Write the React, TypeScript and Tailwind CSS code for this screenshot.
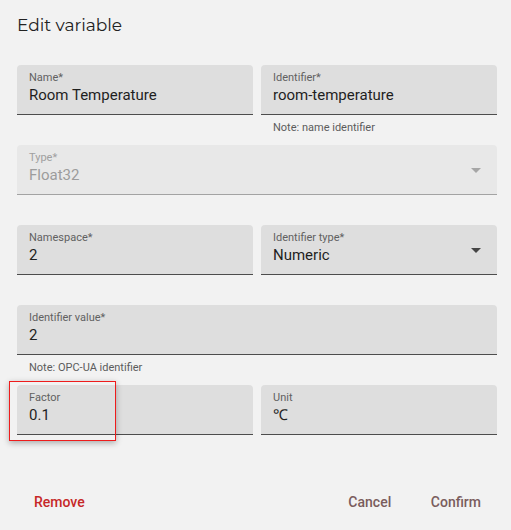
import React from "react";

const ROBOTO = "font-['Roboto','Liberation_Sans',sans-serif]";

function Arrow({ disabled }: { disabled?: boolean }) {
  return (
    <svg
      width="10"
      height="5"
      viewBox="0 0 10 5"
      className="absolute right-[16px] top-[23px]"
      aria-hidden
    >
      <path d="M0 0 L10 0 L5 5 Z" fill={disabled ? "#a6a6a6" : "#454545"} />
    </svg>
  );
}

function Field({
  label,
  value,
  note,
  disabled,
  select,
  className = "",
}: {
  label: string;
  value: string;
  note?: string;
  disabled?: boolean;
  select?: boolean;
  className?: string;
}) {
  return (
    <div className={`flex flex-col ${className}`}>
      <div
        className={`relative h-[50px] rounded-t-[4px] border-b border-solid px-3 pt-[6px] ${
          disabled
            ? "border-[#a3a3a3] bg-[#e8e8e8]"
            : "border-[#4d4d4d] bg-[#dedede]"
        }`}
      >
        <div
          className={`text-[11px] leading-[14px] ${
            disabled ? "text-[#a0a0a0]" : "text-[#616161]"
          }`}
        >
          {label}
        </div>
        <div
          className={`text-[15px] leading-[21px] ${
            disabled ? "text-[#9c9c9c]" : "text-[#1f1f1f]"
          }`}
        >
          {value}
        </div>
        {select && <Arrow disabled={disabled} />}
      </div>
      <div className="h-[30px] px-3 pt-[6px] text-[11px] leading-[14px] text-[#5c5c5c]">
        {note}
      </div>
    </div>
  );
}

export default function App() {
  return (
    <div
      className={`relative h-[530px] w-[511px] overflow-hidden bg-[#f2f2f2] ${ROBOTO}`}
    >
      <h2 className="m-0 px-[17px] pt-[13px] font-['Montserrat','Open_Sans','Lato',sans-serif] text-[17px] font-normal leading-[24px] text-[#222]">
        Edit variable
      </h2>

      <div className="grid grid-cols-2 gap-x-2 px-[17px] pt-[28px] pr-[14px]">
        <Field label="Name*" value="Room Temperature" />
        <Field
          label="Identifier*"
          value="room-temperature"
          note="Note: name identifier"
        />
        <Field
          className="col-span-2"
          label="Type*"
          value="Float32"
          disabled
          select
        />
        <Field label="Namespace*" value="2" />
        <Field label="Identifier type*" value="Numeric" select />
        <Field
          className="col-span-2"
          label="Identifier value*"
          value="2"
          note="Note: OPC-UA identifier"
        />
        <Field label="Factor" value="0.1" />
        <Field label="Unit" value="℃" />
      </div>

      <div className="flex items-center px-[26px] pt-[19px] pr-[22px] text-[14px] font-medium leading-[36px]">
        <button className="min-w-[64px] px-2 text-[#c62828]">Remove</button>
        <div className="flex-1" />
        <button className="min-w-[64px] px-2 text-[#7a5d5d]">Cancel</button>
        <button className="ml-[21px] min-w-[64px] px-2 text-[#7a5d5d]">
          Confirm
        </button>
      </div>

      <div className="pointer-events-none absolute left-[9px] top-[381px] h-[60px] w-[107px] border border-solid border-[#ee1c1c] shadow-[0_2px_6px_rgba(0,0,0,0.3)]" />
    </div>
  );
}
